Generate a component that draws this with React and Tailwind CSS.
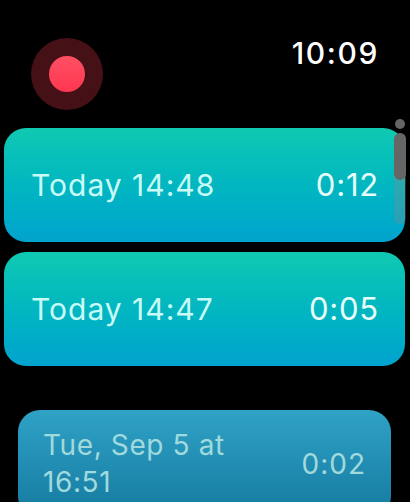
const recordings = [
  { label: "Today 14:48", time: "0:12" },
  { label: "Today 14:47", time: "0:05" },
];

const RecordingCard = ({ label, time }) => (
  <div className="flex items-center justify-between h-[114px] rounded-[22px] pl-[27px] pr-[26px] bg-gradient-to-b from-[#10c9b1] to-[#02a3ce] text-[#c8fbf6] text-[30px] leading-9 tracking-[1px]">
    <span>{label}</span>
    <span className="text-[#e6fdfb] text-[31px] tracking-[0.8px]">{time}</span>
  </div>
);

const App = () => {
  return (
    <div className="relative w-[410px] h-[502px] overflow-hidden bg-black font-['Inter',sans-serif]">
      <header className="flex justify-between h-[128px] pl-[31px] pr-[31px] pt-[38px]">
        <div className="flex items-center justify-center w-[72px] h-[72px] rounded-full bg-[#451016]">
          <div className="w-9 h-9 rounded-full bg-gradient-to-b from-[#ff4f63] to-[#ff3650]" />
        </div>
        <span className="text-white text-[30px] leading-9 font-medium tracking-[1.6px] -mt-[3px]">10:09</span>
      </header>

      <main className="flex flex-col gap-[10px] pl-1 pr-[5px]">
        {recordings.map((r) => (
          <RecordingCard key={r.label} {...r} />
        ))}
        <div className="flex items-center justify-between h-[108px] mt-[34px] mx-[14px] rounded-[22px] pl-[25px] pr-[25px] bg-gradient-to-b from-[#2fa2c6] to-[#14799f] text-[#a0dadd] text-[28px] leading-[37px] tracking-[0.6px]">
          <span className="w-[225px]">Tue, Sep 5 at 16:51</span>
          <span className="tracking-[1px]">0:02</span>
        </div>
      </main>

      {/* scroll indicator */}
      <div className="absolute left-[395px] top-[119px] w-[10px] h-[10px] rounded-full bg-[#646464]" />
      <div className="absolute left-[394px] top-[133px] w-3 h-[91px] rounded-full bg-[#8a8a8a]/30">
        <div className="w-3 h-[47px] rounded-full bg-[#666666]" />
      </div>
    </div>
  );
};

export default App;
